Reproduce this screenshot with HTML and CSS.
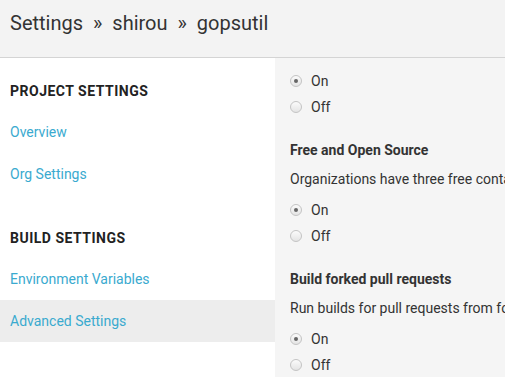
FILE: index.html
```html
<!DOCTYPE html>
<html lang="en">
<head>
    <meta charset="UTF-8">
    <meta name="viewport" content="width=device-width, initial-scale=1.0">
    <title>Settings</title>
    <link rel="stylesheet" href="styles.css">
</head>
<body>
    <div class="header">
        <h1>Settings <span class="sep">&raquo;</span> shirou <span class="sep">&raquo;</span> gopsutil</h1>
    </div>
    <div class="content">
        <div class="sidebar">
            <div class="nav-section">
                <h2>Project Settings</h2>
                <a href="#" class="nav-link">Overview</a>
                <a href="#" class="nav-link">Org Settings</a>
            </div>
            <div class="nav-section build">
                <h2>Build Settings</h2>
                <a href="#" class="nav-link">Environment Variables</a>
                <a href="#" class="nav-link active">Advanced Settings</a>
            </div>
        </div>
        <div class="main">
            <div class="setting">
                <label class="radio"><span class="dot checked"></span>On</label>
                <label class="radio"><span class="dot"></span>Off</label>
            </div>
            <div class="setting">
                <h3>Free and Open Source</h3>
                <p>Organizations have three free containers on Linux for open source projects.</p>
                <label class="radio"><span class="dot checked"></span>On</label>
                <label class="radio"><span class="dot"></span>Off</label>
            </div>
            <div class="setting">
                <h3>Build forked pull requests</h3>
                <p>Run builds for pull requests from forks.</p>
                <label class="radio"><span class="dot checked"></span>On</label>
                <label class="radio"><span class="dot"></span>Off</label>
            </div>
        </div>
    </div>
</body>
</html>
```

FILE: styles.css
```css
body {
    font-family: Roboto, "Liberation Sans", sans-serif;
    margin: 0;
    color: #333;
    background-color: #f5f5f5;
    font-size: 14px;
}
.header {
    height: 58px;
    box-sizing: border-box;
    padding: 11px 10px 0;
    background: #f3f3f3;
    border-bottom: 1px solid #d4d4d4;
}
.header h1 {
    margin: 0;
    font-size: 20px;
    font-weight: normal;
    line-height: 24px;
    color: #333;
    white-space: nowrap;
}
.header .sep {
    margin: 0 5px;
}
.content {
    display: flex;
    height: 319px;
    overflow: hidden;
}
.sidebar {
    width: 275px;
    flex-shrink: 0;
    background: white;
}
.nav-section {
    padding-top: 23px;
}
.nav-section.build {
    padding-top: 33px;
}
.nav-section h2 {
    margin: 0 10px 10px;
    font-size: 14px;
    line-height: 20px;
    font-weight: bold;
    text-transform: uppercase;
    letter-spacing: 0.5px;
    color: #222;
}
.nav-link {
    display: block;
    height: 42px;
    line-height: 42px;
    padding: 0 10px;
    color: #3aaacf;
    text-decoration: none;
}
.nav-link.active {
    background: #ededed;
}
.main {
    flex: 1;
    padding: 10px 0 0 15px;
    white-space: nowrap;
    overflow: hidden;
}
.setting {
    margin-bottom: 20px;
}
.setting h3 {
    margin: 0 0 9px;
    font-size: 14px;
    line-height: 20px;
    font-weight: bold;
    color: #333;
}
.setting p {
    margin: 0 0 8px;
    line-height: 20px;
}
.radio {
    display: flex;
    align-items: center;
    height: 26px;
    gap: 9px;
}
.dot {
    width: 12px;
    height: 12px;
    box-sizing: border-box;
    border-radius: 50%;
    border: 1px solid #c4c4c4;
    background: linear-gradient(#fbfbfb, #e4e4e4);
    display: flex;
    align-items: center;
    justify-content: center;
}
.dot.checked::after {
    content: "";
    width: 4px;
    height: 4px;
    border-radius: 50%;
    background: #666;
}
```
